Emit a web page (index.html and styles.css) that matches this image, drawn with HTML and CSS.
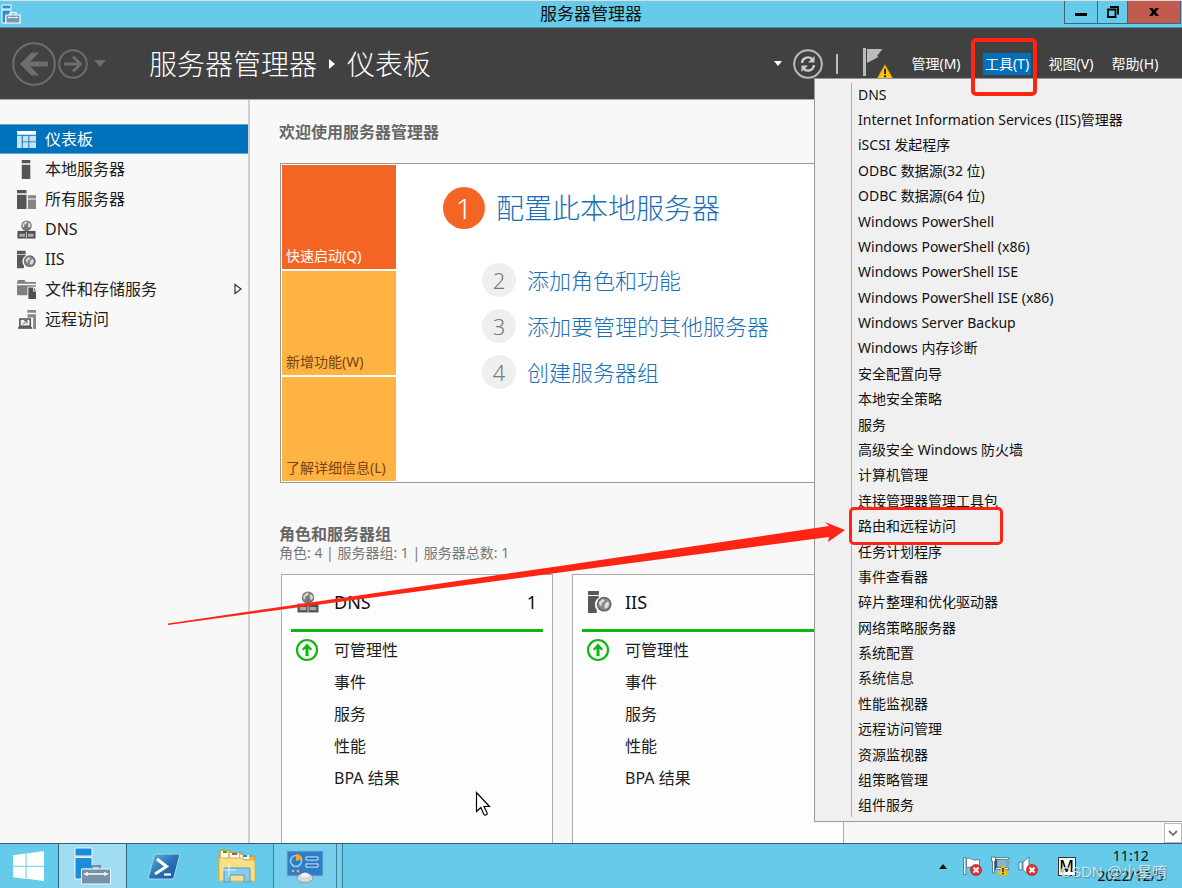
FILE: index.html
```html
<!DOCTYPE html>
<html lang="zh-CN">
<head>
<meta charset="utf-8">
<title>服务器管理器</title>
<link rel="stylesheet" href="styles.css">
</head>
<body>
<svg class="defs" aria-hidden="true">
  <symbol id="dns" viewBox="0 0 20 20">
    <circle cx="10" cy="6" r="5.600" fill="#787878"/>
    <path d="M5.600 4.500 9 1.300l2 .8-1.200 2.200L7.500 5l.2 2.500H6zM11.500 3.500l2-.4 1.300 3-1.800 2.400-1.300-1.700z" fill="#d6d6d6"/>
    <path d="M.5 11.500h19v8H.5z" fill="#505050"/>
    <path d="M2.500 14.500h6v3h-6zM11.500 14.500h6v3h-6z" fill="#aaa"/>
    <path d="M9.700 12.500h.8v7h-.8z" fill="#ddd"/>
  </symbol>
  <symbol id="iis" viewBox="0 0 22 20">
    <path d="M0 0h10v3.500H0zM0 4.500h10v1.300a7.500 7.500 0 0 0-2 11.200v3H0z" fill="#585858"/>
    <circle cx="14.800" cy="12" r="6.800" fill="#686868"/>
    <circle cx="14.800" cy="12" r="5.400" fill="#888"/>
    <path d="M10 10.500 13 7.300l2.500.8-1.500 2-1.700 1.400.2 2.200-1.800-.8zM16 11l2.500-1.700 1 2.500-1.500 3.500-2.500.8-.6-2.200z" fill="#ddd"/>
  </symbol>
  <symbol id="up" viewBox="0 0 24 24">
    <circle cx="12" cy="12" r="10" fill="#fff" stroke="#0fb80f" stroke-width="2.200"/>
    <path d="M12 5.500 17 11l-1.200 1.500-2.300-1.700V18h-3v-7.200l-2.300 1.700L7 11z" fill="#0fb80f"/>
  </symbol>
  <symbol id="err" viewBox="0 0 12 12">
    <circle cx="6" cy="6" r="5.600" fill="#e03030" stroke="#b81c1c" stroke-width=".6"/>
    <path d="m3.500 3.500 5 5m0-5-5 5" stroke="#fff" stroke-width="2"/>
  </symbol>
  <symbol id="warn" viewBox="0 0 14 13">
    <path d="M7 .5 13.700 12.500H.3z" fill="#ffc20e" stroke="#d89c00" stroke-width=".5"/>
    <path d="M6.200 4.200h1.700v4.500H6.200zM6.200 9.800h1.700v1.700H6.200z" fill="#222"/>
  </symbol>
</svg>

<header class="titlebar">
  <svg class="app-icon" viewBox="0 0 20 20">
    <path d="M1 1h9v4H1zM1 6h9v4L5 12v7H1z" fill="#2490dd" stroke="#fff" stroke-width="1"/>
    <path d="M5 11h14v8H5z" fill="#7896aa" stroke="#fff" stroke-width="1.200"/>
    <path d="M9 11V8.500h6V11" fill="none" stroke="#fff" stroke-width="1.200"/>
    <path d="M7 13.500h10M8 12.500v2M16 12.500v2" stroke="#fff" stroke-width=".8"/>
  </svg>
  <h1 class="window-title">服务器管理器</h1>
  <div class="window-buttons">
    <button class="wb" aria-label="最小化"><svg viewBox="0 0 12 12"><path d="M0 7h12v3H0z" fill="#000"/></svg></button>
    <button class="wb" aria-label="还原"><svg viewBox="0 0 12 12"><path d="M1 3.500h7.500V11H1zM3 1h8v7.500" fill="none" stroke="#000" stroke-width="1.800"/></svg></button>
    <button class="wb wb-close" aria-label="关闭"><svg viewBox="0 0 12 12"><path d="M1 2h3.500L6 4.200 7.500 2H11L7.800 6l3.200 4H7.500L6 7.800 4.500 10H1l3.200-4z" fill="#000"/></svg></button>
  </div>
</header>

<nav class="toolbar">
  <button class="icon-btn" aria-label="后退"><svg class="back" viewBox="0 0 44 44"><circle cx="22" cy="22" r="20.800" fill="none" stroke="#6e6e6e" stroke-width="2"/><path d="M8 22 19.500 10.500H27L18.500 19.500H36v5H18.500L27 33.500h-7.500z" fill="#6e6e6e"/></svg></button>
  <button class="icon-btn" aria-label="前进"><svg class="fwd" viewBox="0 0 30 30"><circle cx="15" cy="15" r="13.800" fill="none" stroke="#6e6e6e" stroke-width="2"/><path d="M6 15h16M15 7.500l7.500 7.500-7.500 7.500" fill="none" stroke="#6e6e6e" stroke-width="3"/></svg></button>
  <button class="icon-btn history" aria-label="历史记录"><svg viewBox="0 0 12 7"><path d="M0 0h12L6 7z" fill="#6e6e6e"/></svg></button>
  <div class="crumbs"><span>服务器管理器</span><svg viewBox="0 0 6 10"><path d="M0 0 6 5 0 10z" fill="#fff"/></svg><span>仪表板</span></div>
  <div class="toolbar-right">
    <button class="icon-btn drop" aria-label="展开"><svg viewBox="0 0 8 5"><path d="M0 0h8L4 5z" fill="#fff"/></svg></button>
    <button class="icon-btn refresh" aria-label="刷新"><svg viewBox="0 0 30 30"><circle cx="15" cy="15" r="13.800" fill="none" stroke="#bbb" stroke-width="2"/><path d="M9 14a6 6 0 0 1 10-4M21 16a6 6 0 0 1-10 4" fill="none" stroke="#ccc" stroke-width="2.400"/><path d="M21.500 7v6.500H15zM8.500 23v-6.500H15z" fill="#ccc"/></svg></button>
    <span class="divider"></span>
    <button class="icon-btn flag" aria-label="通知"><svg viewBox="0 0 32 32"><path d="M2 0h3v28H2z" fill="#bbb"/><path d="M6 1h15.500l-5.500 7 1.500 1L6 15z" fill="#bbb"/><use href="#warn" x="16" y="16" width="16" height="15"/></svg></button>
    <button class="menu-btn">管理(M)</button>
    <button class="menu-btn menu-open">工具(T)</button>
    <button class="menu-btn">视图(V)</button>
    <button class="menu-btn">帮助(H)</button>
  </div>
</nav>

<main class="workspace">
  <aside class="sidebar">
    <a class="side-item selected" href="#"><svg viewBox="0 0 20 20"><path d="M0 1h20v4H0z" fill="#fff"/><path d="M0 6h5v13H0zM6 6h6v6H6zM13 6h7v6h-7zM6 13h6v6H6zM13 13h7v6h-7z" fill="#c8e2f4"/></svg>仪表板</a>
    <a class="side-item" href="#"><svg viewBox="0 0 20 20"><path d="M5 0h9v3.500H5zM5 5h9v15H5z" fill="#555"/></svg>本地服务器</a>
    <a class="side-item" href="#"><svg viewBox="0 0 20 20"><path d="M0 0h10v3.500H0zM0 5h10v15H0z" fill="#555"/><path d="M11.500 5.500H20V9h-8.500zM11.500 10H20v10h-8.500z" fill="#858585"/></svg>所有服务器</a>
    <a class="side-item" href="#"><svg><use href="#dns"/></svg>DNS</a>
    <a class="side-item" href="#"><svg><use href="#iis"/></svg>IIS</a>
    <a class="side-item" href="#"><svg viewBox="0 0 20 20"><path d="M0 3 1 0h7l1 2h11v2H9L8 4H0zM0 5.500h20V7h-9v9H0z" fill="#808080"/><path d="M12 8h5v4h3v8h-8z" fill="#505050"/><path d="M17.800 8.200 20 11h-2.200z" fill="#505050"/></svg>文件和存储服务<svg class="expand" viewBox="0 0 8 12"><path d="M1 1.500 7 6l-6 4.500z" fill="#fff" stroke="#333" stroke-width="1.200"/></svg></a>
    <a class="side-item" href="#"><svg viewBox="0 0 20 20"><path d="M11 0h9v3H11zM11 4.500h9V20h-3V8h-6z" fill="#888"/><path d="M3 9.500h11v7.500H3z" fill="#eee" stroke="#505050" stroke-width="1.600"/><path d="M1 18h15v1.800H1z" fill="#505050"/><path d="m6.500 15 4-4m-3 0h3v3" fill="none" stroke="#555"/></svg>远程访问</a>
  </aside>

  <section class="content">
    <h2 class="heading">欢迎使用服务器管理器</h2>
    <div class="welcome">
      <div class="tiles">
        <button class="tile tile-active">快速启动(Q)</button>
        <button class="tile">新增功能(W)</button>
        <button class="tile">了解详细信息(L)</button>
      </div>
      <ol class="steps">
        <li class="step step-main"><span class="num">1</span><a href="#">配置此本地服务器</a></li>
        <li class="step"><span class="num">2</span><a href="#">添加角色和功能</a></li>
        <li class="step"><span class="num">3</span><a href="#">添加要管理的其他服务器</a></li>
        <li class="step"><span class="num">4</span><a href="#">创建服务器组</a></li>
      </ol>
    </div>

    <h2 class="heading groups-heading">角色和服务器组</h2>
    <p class="summary">角色: 4 | 服务器组: 1 | 服务器总数: 1</p>
    <div class="cards">
      <article class="card">
        <h3 class="card-head"><svg><use href="#dns"/></svg><span>DNS</span><span class="count">1</span></h3>
        <ul class="card-list">
          <li><svg><use href="#up"/></svg>可管理性</li><li>事件</li><li>服务</li><li>性能</li><li>BPA 结果</li>
        </ul>
      </article>
      <article class="card">
        <h3 class="card-head"><svg class="wide"><use href="#iis"/></svg><span>IIS</span></h3>
        <ul class="card-list">
          <li><svg><use href="#up"/></svg>可管理性</li><li>事件</li><li>服务</li><li>性能</li><li>BPA 结果</li>
        </ul>
      </article>
    </div>
    <button class="scroll-down" aria-label="向下滚动"><svg viewBox="0 0 10 6"><path d="m1 1 4 4 4-4" fill="none" stroke="#777" stroke-width="1.800"/></svg></button>
  </section>
</main>

<footer class="taskbar">
  <button class="task start" aria-label="开始"><svg viewBox="0 0 32 32"><path d="M0 4.500 13 2.700v12.600H0zM14 2.500 32 0v15.300H14zM0 16.300h13V29L0 27.200zM14 16.300h18V31l-18-2.300z" fill="#fff"/></svg></button>
  <button class="task manager" aria-label="服务器管理器"><svg viewBox="0 0 38 38"><path d="M1 1h17v8H1zM1 10.500h17V22H8v10H1z" fill="#1c8bdc" stroke="#e8f6fd"/><path d="M18 22v-3h8v3" fill="none" stroke="#7890a4" stroke-width="2"/><path d="M7.500 22h29v15h-29z" fill="#7892a8" stroke="#e8f6fd"/><path d="M10 27h24M13 25v4M31 25v4" stroke="#fff" stroke-width="1.300"/></svg></button>
  <button class="task" aria-label="Windows PowerShell"><svg viewBox="0 0 34 34"><defs><linearGradient id="ps" x2="1" y2="1"><stop stop-color="#71b4e2"/><stop offset=".5" stop-color="#2876b8"/><stop offset="1" stop-color="#175394"/></linearGradient></defs><path d="M9 5h22q2 0 1.500 2L27 28q-.6 2-2.500 2H3q-2 0-1.500-2L7 7q.5-2 2-2z" fill="url(#ps)" stroke="#a9d7ef"/><path d="m10 10 9.500 7.500L8 25" fill="none" stroke="#fff" stroke-width="3"/><path d="M17 25.500h7" stroke="#fff" stroke-width="2.200"/></svg></button>
  <button class="task files" aria-label="文件资源管理器"><svg viewBox="0 0 38 34"><path d="M1 4Q1 1 3 1h8l2 3h11l1 3h10q2 0 2 2v22H1z" fill="#e4be50" stroke="#bd942f"/><path d="M3 2h7v7H3zM12 4h9v5h-9zM22 6h9v4h-9z" fill="#fff"/><path d="M5 2h4v2H5z" fill="#1fae3c"/><path d="M14 4h5v2h-5z" fill="#d5432e"/><path d="M25 6h4v2h-4z" fill="#2488d8"/><path d="M1 9h24l1 2h11v21H1z" fill="#f7df87" stroke="#d9b44b"/><path d="M6 33V20q0-1 1-1h24q1 0 1 1v13h-6v-7H12v7z" fill="#8acbea" stroke="#4b9dc9"/><path d="M11 14v14M4 21h14" stroke="#fff" stroke-opacity=".8"/></svg></button>
  <button class="task panel" aria-label="控制面板"><svg viewBox="0 0 38 34"><path d="M1 2h36v25H1z" fill="#2d7ec6" stroke="#75b7e4"/><circle cx="10" cy="12" r="5.500" fill="none" stroke="#8fd0f5" stroke-width="1.600"/><path d="M10 12V5a7 7 0 0 1 6.500 5z" fill="#ffa51f"/><path d="M20 8h12v3H20zM20 15h12v3H20z" fill="#1b62ab" stroke="#dff3ff"/><circle cx="7" cy="22" r="1.300" fill="#ffb33e"/><circle cx="12" cy="22" r="1.600" fill="#ff9a54"/><ellipse cx="19" cy="29" rx="8" ry="4.500" fill="#d7dadd" stroke="#9298a0"/><path d="M14 26q5-5 10 0l-3 2h-5z" fill="#f2f3f4"/></svg></button>
  <span class="stacked"></span>
  <div class="tray">
    <button class="tray-btn more" aria-label="显示隐藏的图标"><svg viewBox="0 0 8 5"><path d="M4 0 8 5H0z" fill="#111"/></svg></button>
    <button class="tray-btn" aria-label="操作中心"><svg viewBox="0 0 20 20"><path d="M1.500 1.500h2.500v17H1.500z" fill="#eee" stroke="#4a6d7c" stroke-width=".8"/><path d="M4.500 2.500q3-1 5 .5t5 1l3-.5v9q-4 1-6-.5t-7-.5z" fill="#fff" stroke="#4a6d7c" stroke-width=".8"/><use href="#err" x="8" y="8" width="12" height="12"/></svg></button>
    <button class="tray-btn" aria-label="网络"><svg viewBox="0 0 20 20"><path d="M6 2.500h12v10H6z" fill="#87b5c9" stroke="#345361" stroke-width="2.200"/><path d="M6 2.500h12v10H6M9 16h6" fill="none" stroke="#e8f4f8"/><path d="M1.500 1h4v4h-1v12h-2V5h-1z" fill="#fff" stroke="#47646f" stroke-width=".8"/><use href="#warn" x="7" y="8" width="12" height="12"/></svg></button>
    <button class="tray-btn" aria-label="音量"><svg viewBox="0 0 20 20"><path d="M1 6h3v8H1zM5 6l6-5v18l-6-5z" fill="#fff" stroke="#4a6d7c" stroke-width=".8"/><use href="#err" x="8" y="8" width="12" height="12"/></svg></button>
    <button class="ime">M</button>
    <time class="clock"><span>11:12</span><span>2022/12/5</span></time>
  </div>
  <span class="watermark">CSDN @小星唷</span>
</footer>

<ul class="tools-menu">
  <li>DNS</li>
  <li>Internet Information Services (IIS)管理器</li>
  <li>iSCSI 发起程序</li>
  <li>ODBC 数据源(32 位)</li>
  <li>ODBC 数据源(64 位)</li>
  <li>Windows PowerShell</li>
  <li>Windows PowerShell (x86)</li>
  <li>Windows PowerShell ISE</li>
  <li>Windows PowerShell ISE (x86)</li>
  <li>Windows Server Backup</li>
  <li>Windows 内存诊断</li>
  <li>安全配置向导</li>
  <li>本地安全策略</li>
  <li>服务</li>
  <li>高级安全 Windows 防火墙</li>
  <li>计算机管理</li>
  <li>连接管理器管理工具包</li>
  <li class="marked">路由和远程访问</li>
  <li>任务计划程序</li>
  <li>事件查看器</li>
  <li>碎片整理和优化驱动器</li>
  <li>网络策略服务器</li>
  <li>系统配置</li>
  <li>系统信息</li>
  <li>性能监视器</li>
  <li>远程访问管理</li>
  <li>资源监视器</li>
  <li>组策略管理</li>
  <li>组件服务</li>
</ul>
<span class="tools-frame"></span>
<svg class="arrow" viewBox="0 0 680 106"><path d="M1 103.600 130 84.500 393 46 662 6 658 2 678 10 661 22 662 17 393 52.500 130 87.500 1 105z" fill="#ff2413"/></svg>
<svg class="cursor" viewBox="0 0 16 26"><path d="M1.500 1.500v19l4.300-4 3.200 7q1 1.300 2.700 0 .8-.8.300-1.700l-3-6.300h5.500z" fill="#fff" stroke="#000" stroke-width="1.200"/></svg>
</body>
</html>
```
FILE: styles.css
```css
*, *::after { box-sizing: border-box; margin: 0; padding: 0; }

body {
  position: relative;
  display: flex;
  flex-direction: column;
  height: 100vh;
  overflow: hidden;
  background: #f8f8f8;
  color: #1e1e1e;
  font: 16px/20px "Noto Sans", "Noto Sans CJK SC", sans-serif;
}

button { border: 0; background: none; color: inherit; font: inherit; }
a { color: inherit; text-decoration: none; }
ul, ol { list-style: none; }
svg { display: block; flex: none; }
.defs { position: absolute; width: 0; height: 0; }

/* Title bar */
.titlebar {
  display: grid;
  grid-template-columns: 1fr auto 1fr;
  height: 28px;
  border-top: 1px solid #dedede;
  border-bottom: 1px solid #4a8ba3;
  background: #66caea;
}
.app-icon { width: 20px; height: 20px; margin: 3px 0 0 1px; }
.window-title { color: #111; font-size: 17px; font-weight: 400; line-height: 26px; }
.window-buttons {
  display: flex;
  justify-self: end;
  height: 23px;
  margin-right: 1px;
  border: 1px solid #3c6472;
  border-top: 0;
}
.wb { display: grid; place-items: center; width: 32px; }
.wb + .wb { width: 30px; border-left: 1px solid #3c6472; }
.wb svg { width: 12px; height: 12px; }
.wb + .wb-close { width: 53px; background: #c35a50; }

/* Toolbar */
.toolbar {
  display: flex;
  align-items: center;
  height: 72px;
  padding-left: 12px;
  border-bottom: 1px solid #aaa;
  background: #414141;
  color: #fff;
}
.icon-btn { display: block; }
.back { width: 44px; height: 44px; }
.fwd { width: 30px; height: 30px; margin-left: 2px; }
.history svg { width: 12px; height: 7px; margin-left: 6px; }
.crumbs {
  display: flex;
  align-items: center;
  gap: 12px;
  margin-left: 43px;
  font-size: 28px;
  font-weight: 300;
  line-height: 40px;
  white-space: nowrap;
}
.crumbs svg { width: 6px; height: 10px; }
.toolbar-right { display: flex; align-items: center; margin-left: auto; padding-right: 15px; }
.drop svg { width: 8px; height: 5px; margin-right: 11px; }
.refresh svg { width: 30px; height: 30px; }
.divider { width: 2px; height: 20px; margin: 0 23px 0 13px; background: #bbb; }
.flag svg { width: 32px; height: 32px; margin-right: 10px; }
.menu-btn { width: 66px; font-size: 14px; line-height: 22px; white-space: nowrap; }
.menu-btn + .menu-btn { width: 48px; margin: 0 8px; }
.menu-btn + .menu-open { margin-left: 14px; background: #0070bd; }

/* Sidebar */
.workspace { display: flex; flex: 1; min-height: 0; }
.sidebar { flex: none; width: 250px; padding-top: 24px; border-right: 2px solid #cfcfcf; }
.side-item {
  display: flex;
  align-items: center;
  height: 30px;
  padding: 0 6px 0 17px;
  gap: 9px;
}
.side-item svg { width: 19px; height: 19px; }
.side-item .expand { width: 8px; height: 12px; margin-left: auto; }
.selected { border: solid #5ba7d8; border-width: 1px 0; background: #0072bc; color: #fff; }

/* Content */
.content {
  position: relative;
  display: flex;
  flex: 1;
  flex-direction: column;
  min-width: 0;
  padding: 22px 0 0 29px;
  overflow: hidden;
}
.heading { color: #666; font-size: 16px; line-height: 20px; }
.welcome {
  display: flex;
  margin: 21px 0 0 1px;
  padding: 1px;
  border: 1px solid #999;
  background: #fff;
}
.tiles { display: grid; gap: 2px; width: 114px; grid-auto-rows: 104px; }
.tile {
  display: flex;
  align-items: flex-end;
  padding: 0 4px 4px;
  background: #ffb342;
  color: #7c4210;
  font-size: 14px;
  line-height: 18px;
  white-space: nowrap;
}
.tile-active { background: #f46523; color: #fff; }
.steps { padding: 22px 0 0 47px; }
.step { display: flex; align-items: center; gap: 11px; height: 46px; padding-left: 39px; }
.step a { color: #1a6fb5; font-size: 22px; font-weight: 300; line-height: 32px; }
.num {
  width: 34px;
  border-radius: 50%;
  background: #efefef;
  color: #777;
  font-size: 22px;
  font-weight: 300;
  line-height: 34px;
  text-align: center;
}
.step-main { height: 42px; margin-bottom: 28px; padding-left: 0; }
.step-main a { font-size: 28px; }
.step-main .num { width: 42px; background: #f46523; color: #fff; font-size: 28px; line-height: 42px; }
.groups-heading { margin-top: 41px; }
.summary { color: #777; font-size: 14px; line-height: 18px; }
.cards { display: flex; flex: 1; gap: 19px; margin: 12px 0 0 2px; }
.card {
  flex: none;
  width: 272px;
  padding: 0 9px;
  border: 1px solid #aaa;
  border-bottom: 0;
  background: #fdfdfd;
}
.card-head {
  display: grid;
  grid-template-columns: 22px 1fr auto;
  align-items: center;
  gap: 15px;
  height: 57px;
  padding: 0 6px;
  border-bottom: 3px solid #0fb80f;
  color: #111;
  font-size: 18px;
  font-weight: 400;
}
.card-head svg { width: 22px; height: 22px; }
.card-head .wide { width: 24px; }
.card-list { display: grid; grid-auto-rows: 32px; align-items: center; padding: 2px 0 0 43px; }
.card-list li { display: flex; align-items: center; }
.card-list svg { width: 24px; height: 24px; margin: 0 15px 0 -39px; }
.scroll-down {
  position: absolute;
  right: 0;
  bottom: 0;
  display: grid;
  place-items: center;
  width: 18px;
  height: 20px;
  border: 1px solid #bbb;
  background: #fff;
}
.scroll-down svg { width: 10px; height: 6px; }

/* Taskbar */
.taskbar {
  position: relative;
  display: flex;
  flex: none;
  height: 45px;
  border-top: 1px solid #2f6072;
  background: #66caea;
}
.task { display: grid; place-items: center; width: 73px; }
.task svg { width: 34px; height: 34px; }
.start { width: 58px; padding-right: 2px; }
.start svg { width: 31px; height: 31px; }
.manager { width: 69px; border: solid #34606f; border-width: 0 1px; background: #a0ddf3; }
.manager svg { width: 38px; height: 38px; }
.files svg, .panel svg { width: 38px; height: 34px; }
.panel { width: 64px; border: solid #3f7f94; border-width: 0 1px; background: #78cfeb; }
.stacked { width: 6px; border-right: 1px solid #3f7f94; background: #78cfeb; }
.tray { display: flex; align-items: center; gap: 8px; margin-left: auto; padding-right: 18px; }
.tray-btn svg { width: 20px; height: 20px; }
.more { margin-right: 7px; }
.more svg { width: 8px; height: 5px; }
.ime {
  width: 18px;
  margin: 0 14px 0 12px;
  border: 1px solid #333;
  background: #fff;
  color: #000;
  font-size: 16px;
  font-weight: 500;
  line-height: 17px;
}
.clock { display: grid; justify-items: center; color: #111; font-size: 14px; line-height: 20px; }
.watermark {
  position: absolute;
  right: 15px;
  bottom: 6px;
  color: rgba(235, 240, 243, .8);
  font: 15px/20px "Liberation Sans", "Noto Sans CJK SC", sans-serif;
  text-shadow: 1px 1px 1px rgba(70, 90, 100, .5);
}

/* Open tools menu */
.tools-menu {
  position: absolute;
  top: 78px;
  right: 0;
  bottom: 66px;
  display: grid;
  grid-auto-rows: 1fr;
  width: 368px;
  padding: 3px 0;
  border: 1px solid #999;
  border-right: 0;
  background: linear-gradient(#b0b0b0, #b0b0b0) 36px 4px / 1px calc(100% - 8px) no-repeat #f0f0f0;
  color: #111;
  font-size: 14px;
}
.tools-menu li { position: relative; display: flex; align-items: center; padding-left: 43px; white-space: nowrap; }

/* Annotations */
.marked::after, .tools-frame { content: ""; position: absolute; border: 3px solid #ff2413; border-radius: 5px; }
.marked::after { top: -6px; left: 34px; width: 154px; height: 38px; }
.tools-frame { top: 38px; right: 145px; width: 66px; height: 58px; border-width: 4px; }
.arrow { position: absolute; top: 520px; left: 167px; width: 680px; height: 106px; }
.cursor { position: absolute; top: 791px; left: 475px; width: 16px; height: 26px; }
```
